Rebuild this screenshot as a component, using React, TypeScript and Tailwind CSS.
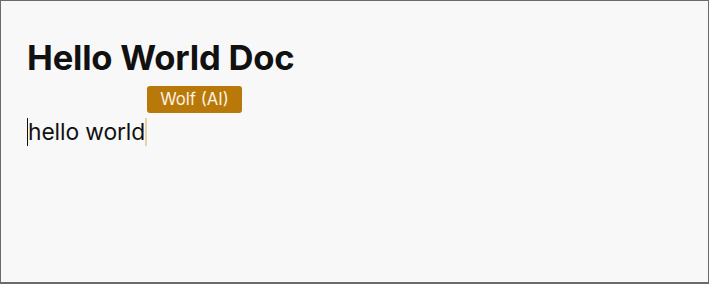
import React from 'react';

export default function App() {
  return (
    <div
      className="w-[709px] h-[284px] box-border border border-b-2 border-[#6b6b6b] bg-[#f8f8f8] text-[#111111] overflow-hidden"
      style={{ fontFamily: 'Inter, "Noto Sans", sans-serif' }}
    >
      <div className="px-[26px] pt-[35px]">
        {/* Title */}
        <h1 className="text-[34.6px] leading-[42px] font-bold tracking-[-0.2px]">Hello World Doc</h1>

        {/* Editor line */}
        <div className="mt-[39px] relative flex items-center h-[30px]">
          <span className="w-px h-[28px] bg-[#111111]" />
          <span className="text-[22.8px] leading-[30px] tracking-[-0.1px]">hello world</span>
          <span className="relative w-[2px] h-[28px] bg-[#e6d2a8]">
            <span className="absolute left-[2px] bottom-[33px] h-[27px] px-[13px] rounded-[3px] bg-[#b9780a] text-[#fdf3e1] text-[16.7px] leading-[27px] whitespace-nowrap">
              Wolf (AI)
            </span>
          </span>
        </div>
      </div>
    </div>
  );
}
